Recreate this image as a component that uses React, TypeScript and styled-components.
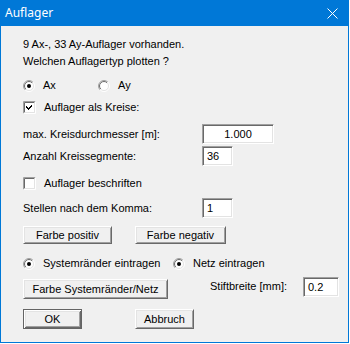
import React from "react";
import styled, { createGlobalStyle } from "styled-components";

const Global = createGlobalStyle`
  html, body { margin: 0; padding: 0; background: #ffffff; }
  #root { width: 350px; height: 344px; }
`;

const Window = styled.div`
  width: 349px;
  height: 343px;
  box-sizing: border-box;
  border: 1px solid #0078d7;
  border-top: none;
  background: #f0f0f0;
  display: flex;
  flex-direction: column;
  font-family: "Liberation Sans", Arial, sans-serif;
  font-size: 11px;
  color: #000;
`;

const TitleBar = styled.div`
  height: 26px;
  flex: none;
  background: #0078d7;
  color: #fff;
  display: flex;
  align-items: center;
  justify-content: space-between;
  padding: 0 10px 0 4px;
  font-family: "Noto Sans", "Segoe UI", sans-serif;
  font-size: 12px;
`;

const Title = styled.span`
  margin-top: -1px;
`;

const Body = styled.div`
  display: flex;
  flex-direction: column;
  padding-left: 22px;
`;

const Row = styled.div<{ $mt: number; $h: number }>`
  display: flex;
  align-items: center;
  margin-top: ${(p) => p.$mt}px;
  height: ${(p) => p.$h}px;
  white-space: nowrap;
`;

const FieldRow = styled(Row)`
  display: grid;
  grid-template-columns: 179px auto;
  align-items: center;
`;

const PenGroup = styled.div`
  display: grid;
  grid-template-columns: 93px 36px;
  margin-left: 42px;
  align-self: stretch;
  align-items: start;
`;

const PenLabel = styled.span`
  line-height: 13px;
  margin-top: 3px;
`;

const Text = styled.span`
  line-height: 13px;
`;

const Choice = styled.label<{ $w?: number }>`
  display: flex;
  align-items: center;
  gap: 8px;
  width: ${(p) => (p.$w ? `${p.$w}px` : "auto")};
  line-height: 13px;
`;

const Input = styled.div<{ $w: number; $align?: string }>`
  box-sizing: border-box;
  width: ${(p) => p.$w}px;
  height: 20px;
  background: #fff;
  border: 1px solid;
  border-color: #a0a0a0 #ffffff #ffffff #a0a0a0;
  box-shadow: inset 1px 1px 0 #696969, inset -1px -1px 0 #e3e3e3;
  display: flex;
  align-items: center;
  justify-content: ${(p) => p.$align || "flex-start"};
  padding: 0 4px;
  line-height: 13px;
`;

const Button = styled.div<{ $w: number; $h?: number; $default?: boolean; $end?: boolean }>`
  box-sizing: border-box;
  width: ${(p) => p.$w}px;
  height: ${(p) => p.$h || 20}px;
  align-self: ${(p) => (p.$end ? "flex-end" : "auto")};
  background: #f0f0f0;
  border: 1px solid;
  border-color: ${(p) =>
    p.$default ? "#646464" : "#ffffff #696969 #696969 #ffffff"};
  box-shadow: ${(p) =>
    p.$default
      ? "inset 1px 1px 0 #ffffff, inset -1px -1px 0 #696969, inset 2px 2px 0 #e3e3e3, inset -2px -2px 0 #a0a0a0"
      : "inset 1px 1px 0 #e3e3e3, inset -1px -1px 0 #a0a0a0"};
  display: flex;
  align-items: center;
  justify-content: center;
  line-height: 13px;
`;

const ButtonGap = styled.div<{ $w: number }>`
  width: ${(p) => p.$w}px;
  flex: none;
`;

const Radio = ({ checked }: { checked?: boolean }) => (
  <svg width="12" height="12" viewBox="0 0 12 12">
    <defs>
      <linearGradient id="ro" x1="0" y1="0" x2="1" y2="1">
        <stop offset="0.5" stopColor="#a0a0a0" />
        <stop offset="0.5" stopColor="#ffffff" />
      </linearGradient>
      <linearGradient id="ri" x1="0" y1="0" x2="1" y2="1">
        <stop offset="0.5" stopColor="#696969" />
        <stop offset="0.5" stopColor="#e3e3e3" />
      </linearGradient>
    </defs>
    <circle cx="6" cy="6" r="5.5" fill="none" stroke="url(#ro)" />
    <circle cx="6" cy="6" r="4.5" fill="#ffffff" stroke="url(#ri)" />
    {checked && <circle cx="6" cy="6" r="2" fill="#000" />}
  </svg>
);

const Check = ({ checked }: { checked?: boolean }) => (
  <svg width="13" height="13" viewBox="0 0 13 13">
    <path d="M0.5 12.5 V0.5 H12.5" fill="none" stroke="#a0a0a0" />
    <path d="M0.5 12.5 H12.5 V0.5" fill="none" stroke="#ffffff" />
    <path d="M1.5 11.5 V1.5 H11.5" fill="none" stroke="#696969" />
    <path d="M1.5 11.5 H11.5 V1.5" fill="none" stroke="#e3e3e3" />
    <rect x="2" y="2" width="9" height="9" fill="#ffffff" />
    {checked && (
      <path
        d="M3 5 L5 7 L9 3 V5 L5 9 L3 7 Z"
        fill="#000"
        shapeRendering="crispEdges"
      />
    )}
  </svg>
);

const Close = () => (
  <svg width="11" height="11" viewBox="0 0 11 11">
    <path d="M0.5 0.5 L10.5 10.5 M10.5 0.5 L0.5 10.5" stroke="#fff" strokeWidth="1" />
  </svg>
);

export default function App() {
  return (
    <>
      <Global />
      <Window>
        <TitleBar>
          <Title>Auflager</Title>
          <Close />
        </TitleBar>
        <Body>
          <Row $mt={12} $h={13}>
            <Text>9 Ax-, 33 Ay-Auflager vorhanden.</Text>
          </Row>
          <Row $mt={4} $h={13}>
            <Text>Welchen Auflagertyp plotten ?</Text>
          </Row>
          <Row $mt={11} $h={13}>
            <Choice $w={75}>
              <Radio checked />
              Ax
            </Choice>
            <Choice>
              <Radio />
              Ay
            </Choice>
          </Row>
          <Row $mt={9} $h={13}>
            <Choice>
              <Check checked />
              Auflager als Kreise:
            </Choice>
          </Row>
          <FieldRow $mt={10} $h={20}>
            <Text>max. Kreisdurchmesser [m]:</Text>
            <Input $w={72} $align="center">1.000</Input>
          </FieldRow>
          <FieldRow $mt={2} $h={20}>
            <Text>Anzahl Kreissegmente:</Text>
            <Input $w={31}>36</Input>
          </FieldRow>
          <Row $mt={11} $h={13}>
            <Choice>
              <Check />
              Auflager beschriften
            </Choice>
          </Row>
          <FieldRow $mt={8} $h={20}>
            <Text>Stellen nach dem Komma:</Text>
            <Input $w={31}>1</Input>
          </FieldRow>
          <Row $mt={8} $h={18}>
            <Button $w={89} $h={18}>Farbe positiv</Button>
            <ButtonGap $w={23} />
            <Button $w={91} $h={18}>Farbe negativ</Button>
          </Row>
          <Row $mt={13} $h={13}>
            <Choice $w={150}>
              <Radio checked />
              Systemränder eintragen
            </Choice>
            <Choice>
              <Radio checked />
              Netz eintragen
            </Choice>
          </Row>
          <Row $mt={7} $h={22}>
            <Button $w={145} $end>
              Farbe Systemränder/Netz
            </Button>
            <PenGroup>
              <PenLabel>Stiftbreite [mm]:</PenLabel>
              <Input $w={36}>0.2</Input>
            </PenGroup>
          </Row>
          <Row $mt={10} $h={20}>
            <Button $w={59} $default>OK</Button>
            <ButtonGap $w={53} />
            <Button $w={59}>Abbruch</Button>
          </Row>
        </Body>
      </Window>
    </>
  );
}
